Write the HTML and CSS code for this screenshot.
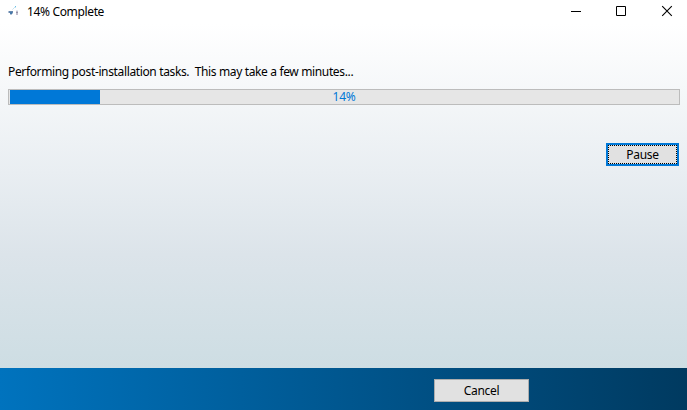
FILE: index.html
```html
<!DOCTYPE html>
<html lang="en">
<head>
<meta charset="utf-8">
<title>14% Complete</title>
<link rel="stylesheet" href="styles.css">
</head>
<body>
<div class="window">
  <header class="titlebar">
    <svg class="app-icon" viewBox="0 0 16 16" width="16" height="16" shape-rendering="crispEdges">
      <path fill="#6cc0e6" d="M8 2h1v1H8z"/>
      <path fill="#c5e4f2" d="M7 3h2v1H7zM6 4h1v1H6z"/>
      <path fill="#e3eaf2" d="M5 5h1v1H5zM9 6h2v1H9z"/>
      <path fill="#6687ae" d="M2 7h4v2H2z"/>
      <path fill="#4679a9" d="M3 8h2v2H3z"/>
      <path fill="#b4c4d7" d="M1 7h1v2H1zM3 10h2v1H3zM5 9h1v1H5z"/>
      <path fill="#c3bfce" d="M9 7h2v4H9z"/>
      <path fill="#9593a9" d="M9 8h2v1H9z"/>
    </svg>
    <h1 class="title">14% Complete</h1>
    <div class="controls">
      <svg viewBox="0 0 10 10" width="10" height="10" shape-rendering="crispEdges"><path d="M0 5h10v1H0z"/></svg>
      <svg viewBox="0 0 10 10" width="10" height="10"><path fill="none" stroke="#000" d="M.5.5h9v9h-9z"/></svg>
      <svg viewBox="0 0 10 10" width="10" height="10"><path fill="none" stroke="#000" stroke-width="1.1" d="M.2.2l9.6 9.6M9.8.2L.2 9.8"/></svg>
    </div>
  </header>
  <main class="content">
    <p class="status">Performing post-installation tasks.&nbsp; This may take a few minutes...</p>
    <div class="progress">
      <div class="fill"></div>
      <span class="percent">14%</span>
    </div>
    <button class="button pause"><span>Pause</span></button>
  </main>
  <footer class="footer">
    <button class="button cancel"><span>Cancel</span></button>
  </footer>
</div>
</body>
</html>
```
FILE: styles.css
```css
* { box-sizing: border-box; }
body {
  margin: 0;
  font: 12px/16px "Noto Sans", "Open Sans", sans-serif;
  color: #000;
}
.window {
  width: 687px;
  height: 410px;
  display: flex;
  flex-direction: column;
  overflow: hidden;
}
.titlebar {
  height: 24px;
  flex: none;
  display: flex;
  align-items: center;
  padding-left: 7px;
  background: #fff;
}
.app-icon { margin-right: 4px; }
.title {
  margin: 0;
  font-size: 12px;
  font-weight: 400;
  letter-spacing: -0.35px;
}
.controls {
  margin-left: auto;
  margin-right: 15px;
  display: flex;
  gap: 36px;
  margin-top: -2px;
}
.controls svg { overflow: visible; }
.controls svg:nth-child(2) { margin-left: -1px; }
.content {
  flex: 1;
  display: flex;
  flex-direction: column;
  padding: 40px 7px 0 8px;
  background: linear-gradient(#fff, #e9eef2 43%, #dce4ea 67%, #cddde3);
}
.status {
  margin: 0;
  white-space: nowrap;
  letter-spacing: -0.36px;
}
.progress {
  display: grid;
  height: 16px;
  margin-top: 9px;
  padding: 1px;
  border: 1px solid #bcbcbc;
  background: #e6e6e6;
  line-height: 12px;
}
.fill, .percent { grid-area: 1 / 1; }
.fill {
  width: 90px;
  height: 14px;
  margin-top: -1px;
  background: #0078d7;
}
.percent {
  text-align: center;
  color: #0078d7;
  letter-spacing: -0.3px;
}
.button {
  padding: 0;
  font: inherit;
  color: #000;
  background: #e1e1e1;
  border: 1px solid #adadad;
  border-radius: 0;
  letter-spacing: -0.3px;
}
.pause {
  align-self: flex-end;
  width: 73px;
  height: 23px;
  margin: 38px 1px 0 0;
  border: 2px solid #0078d7;
}
.pause span {
  display: block;
  height: 19px;
  line-height: 18px;
  border: 1px dotted #000;
}
.footer {
  height: 42px;
  flex: none;
  padding: 11px 0 0 434px;
  background: linear-gradient(90deg, #0073be, #003a60);
}
.cancel {
  display: block;
  width: 95px;
  height: 23px;
}
```
